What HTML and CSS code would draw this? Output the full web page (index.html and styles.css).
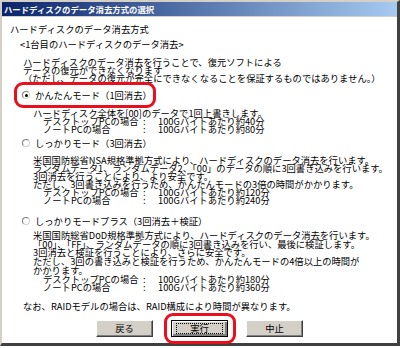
FILE: index.html
```html
<!DOCTYPE html>
<html lang="ja">
<head>
<meta charset="utf-8">
<link rel="stylesheet" href="styles.css">
</head>
<body>
<div class="window">
  <div class="titlebar">ハードディスクのデータ消去方式の選択</div>
  <div class="content">
    <div class="heading">ハードディスクのデータ消去方式</div>
    <div class="sub">&lt;1台目のハードディスクのデータ消去&gt;</div>
    <div class="para p1">
      <div>ハードディスクのデータ消去を行うことで、復元ソフトによる</div>
      <div>データの復元ができなくなります</div>
      <div>（ただし、データの復元が完全にできなくなることを保証するものではありません。）</div>
    </div>

    <div class="option opt1">
      <span class="radio checked"></span>
      <span>かんたんモード（1回消去）</span>
      <span class="mark mark1"></span>
    </div>
    <div class="para detail d1">
      <div>ハードディスク全体を[00]のデータで1回上書きします。</div>
      <div class="pc"><span>デスクトップPCの場合</span><span>:</span><span>100Gバイトあたり約40分</span></div>
      <div class="pc"><span>ノートPCの場合</span><span>:</span><span>100Gバイトあたり約80分</span></div>
    </div>

    <div class="option opt2">
      <span class="radio"></span>
      <span>しっかりモード（3回消去）</span>
    </div>
    <div class="para detail d2">
      <div>米国国防総省NSA規格準拠方式により、ハードディスクのデータ消去を行います。</div>
      <div>ランダムデータ1、ランダムデータ2、「00」のデータの順に3回書き込みを行います。</div>
      <div>3回消去を行うことにより、より安全です。</div>
      <div>ただし、3回書き込みを行うため、かんたんモードの3倍の時間がかかります。</div>
      <div class="pc"><span>デスクトップPCの場合</span><span>:</span><span>100Gバイトあたり約120分</span></div>
      <div class="pc"><span>ノートPCの場合</span><span>:</span><span>100Gバイトあたり約240分</span></div>
    </div>

    <div class="option opt3">
      <span class="radio"></span>
      <span>しっかりモードプラス（3回消去＋検証）</span>
    </div>
    <div class="para detail d3">
      <div>米国国防総省DoD規格準拠方式により、ハードディスクのデータ消去を行います。</div>
      <div>「00」、「FF」、ランダムデータの順に3回書き込みを行い、最後に検証します。</div>
      <div>3回消去と検証を行うことにより、さらに安全です。</div>
      <div>ただし、3回の書き込みと検証を行うため、かんたんモードの4倍以上の時間が</div>
      <div>かかります。</div>
      <div class="pc"><span>デスクトップPCの場合</span><span>:</span><span>100Gバイトあたり約180分</span></div>
      <div class="pc"><span>ノートPCの場合</span><span>:</span><span>100Gバイトあたり約360分</span></div>
    </div>

    <div class="note">なお、RAIDモデルの場合は、RAID構成により時間が異なります。</div>

    <div class="buttons">
      <button class="btn">戻る</button>
      <button class="btn default"><span class="focus">実行</span><span class="mark mark2"></span></button>
      <button class="btn">中止</button>
    </div>
  </div>
</div>
</body>
</html>
```

FILE: styles.css
```css
* { box-sizing: border-box; }
html, body { margin: 0; padding: 0; background: #ffffff; }
body {
  width: 400px;
  height: 348px;
  overflow: hidden;
  font-family: "Noto Sans CJK JP", "DejaVu Sans", sans-serif;
  font-size: 9.3px;
  color: #000;
}
.window {
  width: 400px;
  height: 346px;
  border-top: 2px solid #d4d0c8;
  border-left: 2px solid #d4d0c8;
  border-right: 3px solid #404040;
  border-bottom: 3px solid #404040;
  background: #fff;
  display: flex;
  flex-direction: column;
}
.titlebar {
  height: 15px;
  line-height: 15px;
  padding-left: 2px;
  color: #fff;
  font-weight: bold;
  font-size: 8.4px;
  background: linear-gradient(to right, #0a246a, #a6caf0);
  border-bottom: 1px solid #d4d0c8;
  white-space: nowrap;
}
.content {
  position: relative;
  padding-top: 6px;
  white-space: nowrap;
}
.heading { line-height: 12px; padding-left: 8px; }
.sub { line-height: 12px; margin-top: 3px; padding-left: 18px; }
.para { line-height: 8px; }
.p1 { margin-top: 8px; padding-left: 21px; }
.option {
  position: relative;
  display: flex;
  align-items: center;
  height: 12px;
  line-height: 12px;
  padding-left: 20px;
  gap: 5px;
}
.opt1 { margin-top: 7px; }
.opt2 { margin-top: 4px; }
.opt3 { margin-top: 11px; }
.radio {
  width: 8px;
  height: 8px;
  border-radius: 50%;
  border: 1px solid #808080;
  border-right-color: #d4d0c8;
  border-bottom-color: #d4d0c8;
  background: #fff;
  position: relative;
  flex: none;
}
.radio.checked::after {
  content: "";
  position: absolute;
  left: 1.5px;
  top: 1.5px;
  width: 3px;
  height: 3px;
  border-radius: 50%;
  background: #000;
}
.detail { padding-left: 31px; }
.d1 { margin-top: 8px; }
.d2 { margin-top: 7px; }
.d3 { margin-top: 4px; line-height: 8.7px; }
.pc {
  display: grid;
  grid-template-columns: 100px 15px auto;
  padding-left: 10px;
}
.note { margin-top: 8px; line-height: 12px; padding-left: 21px; }
.buttons {
  display: flex;
  justify-content: center;
  gap: 18px;
  margin-top: 8px;
  padding-left: 0;
}
.btn {
  position: relative;
  width: 57px;
  height: 17px;
  padding: 0;
  font-family: inherit;
  font-size: 9.3px;
  background: #d4d0c8;
  border: 1px solid;
  border-color: #fff #404040 #404040 #fff;
  box-shadow: inset -1px -1px 0 #808080;
  color: #000;
}
.btn.default {
  border: 1px solid #000;
  box-shadow: inset 1px 1px 0 #fff, inset -2px -2px 0 #808080;
  display: flex;
  align-items: center;
  justify-content: center;
}
.focus {
  display: flex;
  align-items: center;
  justify-content: center;
  width: 47px;
  height: 11px;
  border: 1px dotted #000;
}
.mark {
  position: absolute;
  border: 3px solid #e8101c;
  border-radius: 9px;
  pointer-events: none;
}
.mark1 { left: -7px; top: -7px; width: 142px; height: 26px; }
.mark2 { left: -8px; top: -8px; width: 72px; height: 31px; }
.mark1 { left: 12px; }
```
